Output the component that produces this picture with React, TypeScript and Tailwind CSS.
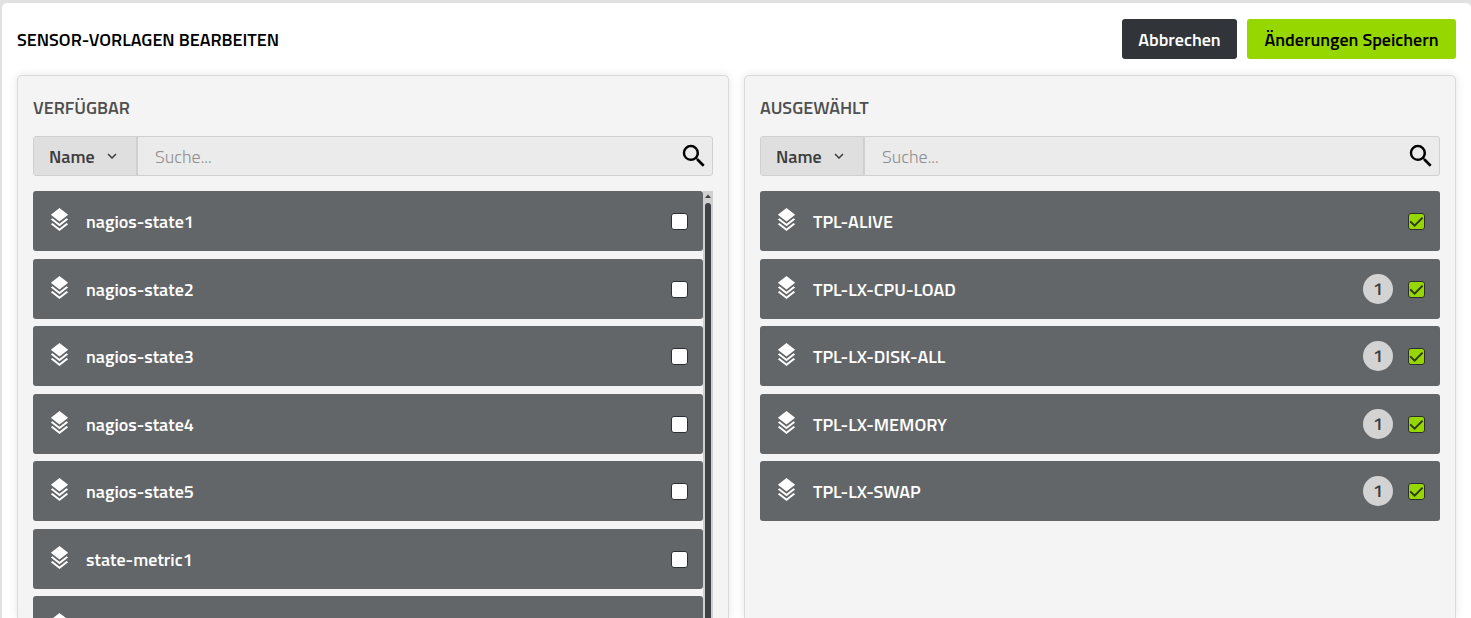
import { useState } from "react";
import clsx from "clsx";

type Template = {
  name: string;
  count?: number;
};

type TemplatePanelProps = {
  id: string;
  title: string;
  templates: Template[];
  checked?: boolean;
  scrollable?: boolean;
};

const available: Template[] = [
  { name: "nagios-state1" },
  { name: "nagios-state2" },
  { name: "nagios-state3" },
  { name: "nagios-state4" },
  { name: "nagios-state5" },
  { name: "state-metric1" },
  { name: "state-metric2" },
];

const selected: Template[] = [
  { name: "TPL-ALIVE" },
  { name: "TPL-LX-CPU-LOAD", count: 1 },
  { name: "TPL-LX-DISK-ALL", count: 1 },
  { name: "TPL-LX-MEMORY", count: 1 },
  { name: "TPL-LX-SWAP", count: 1 },
];

function LayersIcon() {
  return (
    <svg viewBox="0 0 24 24" className="mb-[3px] size-[23px] shrink-0 fill-white" aria-hidden="true">
      <path d="M12 0L3 7L4.63 8.27L12 14L19.36 8.27L21 7L12 0M19.37 10.73L12 16.47L4.62 10.74L3 12L12 19L21 12L19.37 10.73M19.37 15.73L12 21.47L4.62 15.74L3 17L12 24L21 17L19.37 15.73Z" />
    </svg>
  );
}

function SearchIcon() {
  return (
    <svg viewBox="0 0 24 24" className="size-[30px] fill-black" aria-hidden="true">
      <path d="M9.5,3A6.5,6.5 0 0,1 16,9.5C16,11.11 15.41,12.59 14.44,13.73L14.71,14H15.5L20.5,19L19,20.5L14,15.5V14.71L13.73,14.44C12.59,15.41 11.11,16 9.5,16A6.5,6.5 0 0,1 3,9.5A6.5,6.5 0 0,1 9.5,3M9.5,5C7,5 5,7 5,9.5C5,12 7,14 9.5,14C12,14 14,12 14,9.5C14,7 12,5 9.5,5Z" />
    </svg>
  );
}

function SearchBar({ id }: { id: string }) {
  return (
    <div className="flex h-10 overflow-hidden rounded-[3px] border border-[#d0d0d0] bg-[#ebebeb]">
      <div className="relative flex w-26 shrink-0 border-r-2 border-[#d0d0d0] bg-[#dfdfdf]">
        <select
          aria-label="Suchfeld"
          className="w-full appearance-none pt-[2px] pl-[15px] text-lg font-semibold text-[#3c3c3c] outline-none"
        >
          <option>Name</option>
        </select>
        <svg
          viewBox="0 0 24 24"
          className="pointer-events-none absolute top-[10px] right-[15px] size-[18px] fill-[#3c3c3c]"
          aria-hidden="true"
        >
          <path d="M7.41,8.58L12,13.17L16.59,8.58L18,10L12,16L6,10L7.41,8.58Z" />
        </svg>
      </div>
      <input
        id={`${id}-search`}
        type="text"
        aria-label="Suche"
        placeholder="Suche..."
        className="min-w-0 flex-1 px-[17px] pt-[2px] text-lg font-light text-[#3c3c3c] outline-none placeholder:text-[#8f8f8f]"
      />
      <button type="button" aria-label="Suchen" className="flex items-center pr-[3px]">
        <SearchIcon />
      </button>
    </div>
  );
}

function TemplateRow({ id, template, initial }: { id: string; template: Template; initial: boolean }) {
  const [checked, setChecked] = useState(initial);

  return (
    <li className="flex h-15 shrink-0 items-center rounded-[3px] bg-[#636669] px-[15px] odd:mb-2 even:mb-[7px]">
      <LayersIcon />
      <label htmlFor={id} className="ml-[15px] flex-1 pt-[2px] text-lg font-semibold text-white">
        {template.name}
      </label>
      {template.count && (
        <span className="mr-[15px] flex size-[30px] items-center justify-center rounded-full bg-[#d3d3d3] text-lg font-semibold text-[#3c3c3c]">
          {template.count}
        </span>
      )}
      <span className="relative flex">
        <input
          id={id}
          type="checkbox"
          checked={checked}
          onChange={(e) => setChecked(e.target.checked)}
          className="peer size-[17px] appearance-none rounded-[3px] border border-[#2b2f33] bg-white checked:bg-[#97d700]"
        />
        <svg
          viewBox="0 0 17 17"
          className="pointer-events-none invisible absolute inset-0 size-[17px] fill-none stroke-[#2b3a10] stroke-2 peer-checked:visible"
          aria-hidden="true"
        >
          <path d="M2.2 8.4L6.6 12.6L14.6 4.6" />
        </svg>
      </span>
    </li>
  );
}

function Scrollbar() {
  return (
    <div className="flex w-[10px] shrink-0 flex-col items-center bg-[#d0d0d0]">
      <svg viewBox="0 0 10 12" className="h-3 w-[10px] shrink-0 fill-[#3c3f43]" aria-hidden="true">
        <path d="M5 3.5L8 7H2Z" />
      </svg>
      <div className="w-[6px] flex-1 rounded-t-[3px] bg-[#3e4145]" />
    </div>
  );
}

function TemplatePanel({ id, title, templates, checked = false, scrollable = false }: TemplatePanelProps) {
  return (
    <section className="flex min-h-0 flex-col rounded-t-[5px] border border-b-0 border-[#d9d9d9] bg-[#f4f4f4] px-[15px] pt-[15px] shadow-[0_0_10px_rgba(0,0,0,0.1)]">
      <h2 className="mb-[13px] pt-[2px] text-lg leading-[30px] font-semibold text-[#4f4f4f] uppercase">{title}</h2>
      <SearchBar id={id} />
      <div className="mt-[15px] flex min-h-0 flex-1">
        <ul className={clsx("flex min-w-0 flex-1 flex-col", scrollable && "overflow-hidden")}>
          {templates.map((template) => (
            <TemplateRow key={template.name} id={`${id}-${template.name}`} template={template} initial={checked} />
          ))}
        </ul>
        {scrollable && <Scrollbar />}
      </div>
    </section>
  );
}

function App() {
  return (
    <div className="flex h-screen flex-col overflow-hidden bg-[#e1e1e1] pt-[3px] pl-[2px] font-['Titillium_Web',Roboto,sans-serif]">
      <main className="flex min-h-0 flex-1 flex-col rounded-t-[5px] bg-white px-[15px] pt-4">
        <header className="mb-4 flex items-center justify-between">
          <h1 className="pt-[2px] text-lg font-semibold text-black uppercase">Sensor-Vorlagen bearbeiten</h1>
          <div className="flex gap-[10px] text-lg font-semibold">
            <button type="button" className="h-10 min-w-[115px] rounded-[3px] bg-[#31353a] px-[15px] pt-[2px] text-white">
              Abbrechen
            </button>
            <button type="button" className="h-10 min-w-[209px] rounded-[3px] bg-[#97d700] px-[15px] pt-[2px] text-black">
              Änderungen Speichern
            </button>
          </div>
        </header>
        <div className="grid min-h-0 flex-1 grid-cols-2 grid-rows-1 gap-[15px]">
          <TemplatePanel id="available" title="Verfügbar" templates={available} scrollable />
          <TemplatePanel id="selected" title="Ausgewählt" templates={selected} checked />
        </div>
      </main>
    </div>
  );
}

export default App;
